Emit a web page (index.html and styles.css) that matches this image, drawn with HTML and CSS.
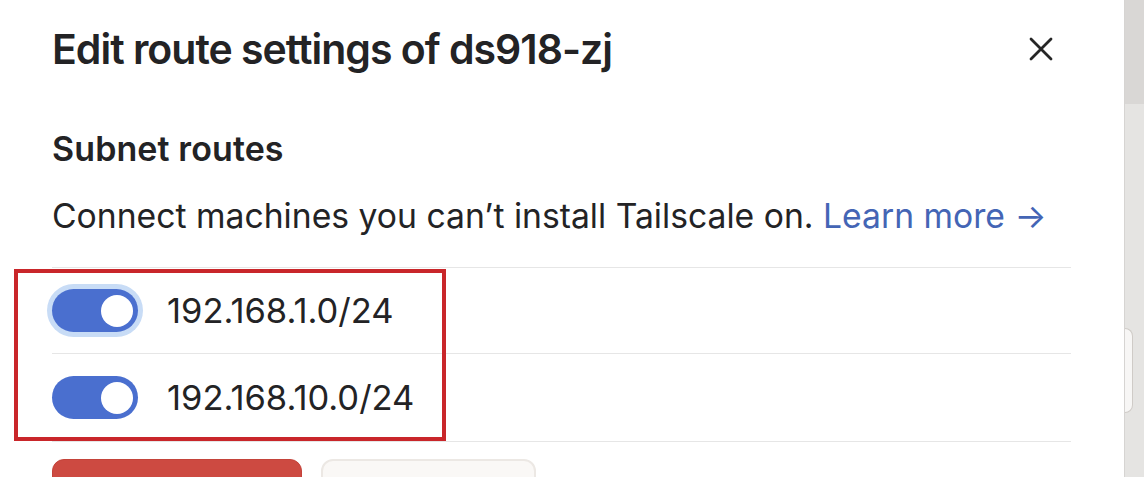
FILE: index.html
```html
<!DOCTYPE html>
<html lang="en">
<head>
<meta charset="utf-8">
<title>Edit route settings</title>
<link rel="stylesheet" href="styles.css">
</head>
<body>
<div class="screen">
  <div class="modal">
    <header class="modal-head">
      <h2 class="title">Edit route settings of ds918-zj</h2>
      <button class="close" aria-label="Close">
        <svg width="24" height="24" viewBox="0 0 24 24"><path d="M2 2 L22 22 M22 2 L2 22" stroke="#262626" stroke-width="2.8" stroke-linecap="round" fill="none"/></svg>
      </button>
    </header>
    <section class="section">
      <h3 class="section-title">Subnet routes</h3>
      <p class="desc">Connect machines you can’t install Tailscale on. <a class="link" href="#">Learn more →</a></p>
      <ul class="routes">
        <li class="route">
          <span class="toggle focused"><span class="knob"></span></span>
          <span class="cidr">192.168.1.0/24</span>
        </li>
        <li class="route">
          <span class="toggle"><span class="knob"></span></span>
          <span class="cidr">192.168.10.0/24</span>
        </li>
      </ul>
      <div class="actions">
        <button class="btn danger" aria-label="Save"></button>
        <button class="btn secondary" aria-label="Cancel"></button>
      </div>
    </section>
    <div class="annotation"></div>
  </div>
  <div class="backdrop">
    <div class="backdrop-top"></div>
    <div class="peek"></div>
  </div>
</div>
</body>
</html>
```
FILE: styles.css
```css
* { box-sizing: border-box; }
html, body {
  margin: 0;
  padding: 0;
  height: 477px;
  overflow: hidden;
  background: #fff;
  font-family: "Inter", "Liberation Sans", sans-serif;
  color: #232325;
}
.screen {
  display: flex;
  height: 477px;
}
.modal {
  position: relative;
  width: 1125px;
  flex: none;
  background: #fff;
  border-right: 1px solid #d6d4d2;
  padding: 25px 53px 0 52px;
}
.modal-head {
  display: flex;
  align-items: center;
  justify-content: space-between;
}
.title {
  margin: 0;
  font-size: 41px;
  line-height: 48px;
  font-weight: 600;
  letter-spacing: -1px;
}
.close {
  border: 0;
  background: none;
  padding: 0;
  margin-right: 18px;
  width: 24px;
  height: 24px;
  display: flex;
}
.section-title {
  margin: 56px 0 0;
  font-size: 34px;
  line-height: 40px;
  font-weight: 600;
  letter-spacing: 0.1px;
}
.desc {
  margin: 27px 0 0;
  font-size: 33.7px;
  line-height: 40px;
  font-weight: 400;
}
.link {
  color: #4465b5;
  text-decoration: none;
}
.routes {
  list-style: none;
  margin: 31px 0 0;
  padding: 0;
  border-top: 1px solid #e6e6e6;
}
.route {
  display: flex;
  align-items: center;
  gap: 29px;
  height: 86px;
  border-bottom: 1px solid #e6e6e6;
}
.route + .route { height: 88px; }
.toggle {
  width: 86px;
  height: 43px;
  border-radius: 22px;
  background: #4a6fcf;
  display: flex;
  align-items: center;
  justify-content: flex-end;
  padding-right: 5px;
  flex: none;
}
.toggle.focused {
  box-shadow: 0 0 0 5px #c8dcf6;
}
.knob {
  width: 32px;
  height: 32px;
  border-radius: 50%;
  background: #fff;
}
.cidr {
  font-size: 34.5px;
  line-height: 40px;
}
.actions {
  display: flex;
  gap: 19px;
  margin-top: 17px;
}
.btn {
  font-family: inherit;
  height: 62px;
  border-radius: 12px;
  padding: 0;
}
.btn.danger {
  width: 250px;
  background: #cd4a41;
  border: 1px solid #c4433a;
}
.btn.secondary {
  width: 215px;
  background: #faf8f6;
  border: 2px solid #ece8e4;
}
.annotation {
  position: absolute;
  left: 14px;
  top: 269px;
  width: 432px;
  height: 172px;
  border: 4px solid #c9262a;
}
.backdrop {
  flex: 1;
  background: #e5e4e2;
  display: flex;
  flex-direction: column;
}
.backdrop-top {
  height: 104px;
  background: #d9d7d5;
}
.peek {
  margin-top: 224px;
  width: 8px;
  height: 85px;
  border: 1px solid #cfcbc7;
  border-left: 0;
  border-radius: 0 8px 8px 0;
  background: #f7f6f5;
}
```
